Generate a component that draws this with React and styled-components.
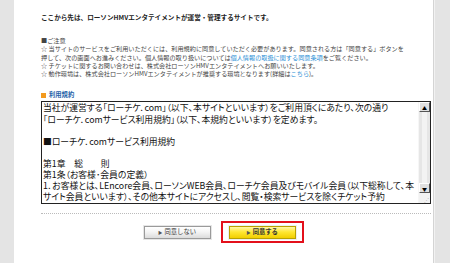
import React from 'react'
import styled, { createGlobalStyle } from 'styled-components'

const Global = createGlobalStyle`
  html, body { margin: 0; padding: 0; }
  body {
    background: #e4e4e4;
    font-family: "Noto Sans CJK JP", "Liberation Sans", sans-serif;
    color: #333;
  }
`

const Frame = styled.div`
  display: flex;
  height: 263px;
  width: 450px;
  overflow: hidden;
`

const Gutter = styled.div`
  width: ${({ $w }) => $w}px;
  flex: none;
  background: #e4e4e4;
  border-left: ${({ $edge }) => ($edge ? '1px solid #f2f2f2' : 'none')};
`

const Main = styled.div`
  width: 420px;
  background: #fff;
  border-right: 1px solid #d4d4d4;
  padding: 12px 0 0 27px;
  box-sizing: border-box;
  display: flex;
  flex-direction: column;
`

const Lead = styled.p`
  margin: 0;
  height: 10px;
  font-size: 6.6px;
  line-height: 10px;
  font-weight: bold;
  color: #222;
  white-space: nowrap;
`

const Notice = styled.div`
  margin-top: 15px;
  font-size: 6.15px;
  color: #444;
  white-space: nowrap;
`

const Line = styled.div`
  height: ${({ $h }) => $h}px;
  line-height: ${({ $h }) => $h}px;
`

const Link = styled.span`
  color: #2b8fd6;
`

const Heading = styled.div`
  margin-top: 13px;
  height: 8px;
  display: flex;
  align-items: center;
  gap: 3px;
  font-size: 6.3px;
  line-height: 8px;
  font-weight: bold;
  color: #1d5fa8;
`

const Square = styled.span`
  width: 5px;
  height: 5px;
  background: #f39a1e;
`

const TermsBox = styled.div`
  margin-top: 2px;
  width: 390px;
  height: 103px;
  border: 1px solid #222;
  box-sizing: border-box;
  display: flex;
`

const TermsText = styled.div`
  flex: 1;
  overflow: hidden;
  padding: 0 0 0 1px;
  font-size: 8.8px;
  font-feature-settings: "palt";
  color: #111;
  white-space: nowrap;
`

const Scroll = styled.div`
  width: 11px;
  flex: none;
  display: flex;
  flex-direction: column;
  background: #ececec;
  border-left: 1px solid #f6f6f6;
`

const Arrow = styled.div`
  height: 10px;
  box-sizing: border-box;
  border: 1px solid #fff;
  border-right-color: #555;
  border-bottom-color: #555;
  background: #e0e0e0;
  display: flex;
  align-items: center;
  justify-content: center;
  font-size: 5px;
  line-height: 5px;
  color: #000;
`

const Track = styled.div`
  flex: 1;
  background: linear-gradient(90deg, #e6e6e6 0 30%, #f3f3f3 30% 70%, #e6e6e6 70%);
`

const Grip = styled.div`
  height: 9px;
  background: #f2f2f2;
  display: flex;
  align-items: flex-end;
  justify-content: flex-end;
  font-size: 5px;
  line-height: 5px;
  color: #aaa;
  padding: 0 1px 1px 0;
`

const Rule = styled.div`
  margin-top: 9px;
  width: 390px;
  border-top: 1px dotted #bbb;
`

const Buttons = styled.div`
  margin-top: 7px;
  margin-left: -27px;
  display: flex;
  justify-content: center;
  align-items: center;
  gap: 10px;
`

const Highlight = styled.div`
  width: 83px;
  height: 22px;
  box-sizing: border-box;
  border: 2px solid #e3101b;
  display: flex;
  align-items: center;
  justify-content: center;
`

const Btn = styled.div`
  width: 67px;
  height: 13px;
  box-sizing: border-box;
  border: 1px solid ${({ $yes }) => ($yes ? '#b9a200' : '#9a9a9a')};
  background: ${({ $yes }) =>
    $yes
      ? 'linear-gradient(#fff7a8, #ffe733 45%, #f2cf00)'
      : 'linear-gradient(#ffffff, #f4f4f4 45%, #dcdcdc)'};
  box-shadow: ${({ $yes }) => ($yes ? '0 0 0 1px #eee' : '0 0 0 1px #e6e6e6')};
  display: flex;
  align-items: center;
  justify-content: center;
  font-size: 6.3px;
  line-height: 8px;
  font-weight: ${({ $yes }) => ($yes ? 'bold' : 'normal')};
  color: #333;
`

const Tri = styled.span`
  font-size: 4.5px;
  margin-right: 2px;
  color: #555;
`

const notices = [
  '■ご注意',
  '☆ 当サイトのサービスをご利用いただくには、利用規約に同意していただく必要があります。同意される方は「同意する」ボタンを',
  null,
  '☆ チケットに関するお問い合わせは、株式会社ローソンHMVエンタテイメントへお願いいたします。',
  null,
]

const terms = [
  '当社が運営する「ローチケ．com」（以下､本サイトといいます）をご利用頂くにあたり､次の通り',
  '「ローチケ．comサービス利用規約」（以下､本規約といいます）を定めます。',
  '\u00a0',
  '■ローチケ．comサービス利用規約',
  '\u00a0',
  '第1章　総　　則',
  '第1条（お客様･会員の定義）',
  '1．お客様とは､LEncore会員､ローソンWEB会員､ローチケ会員及びモバイル会員（以下総称して､本',
  'サイト会員といいます）､その他本サイトにアクセスし､閲覧・検索サービスを除くチケット予約',
  'サービス、ファンクラブの入会手続代行サービス等本サイトにおけるサービス（以下、本サービ',
]

export default function App() {
  return (
    <>
      <Global />
      <Frame>
        <Gutter $w={14} />
        <Main>
          <Lead>ここから先は、ローソンHMVエンタテイメントが運営・管理するサイトです。</Lead>
          <Notice>
            <Line $h={8.3}>{notices[0]}</Line>
            <Line $h={8.3}>{notices[1]}</Line>
            <Line $h={8.3}>
              押して、次の画面へお進みください。個人情報の取り扱いについては<Link>個人情報の取扱に関する同意条項</Link>をご覧ください。
            </Line>
            <Line $h={8.3}>{notices[3]}</Line>
            <Line $h={8.3}>
              ☆ 動作環境は、株式会社ローソンHMVエンタテイメントが推奨する環境となります(詳細は<Link>こちら</Link>)。
            </Line>
          </Notice>
          <Heading>
            <Square />
            利用規約
          </Heading>
          <TermsBox>
            <TermsText>
              {terms.map((t, i) => (
                <Line key={i} $h={11.1}>{t}</Line>
              ))}
            </TermsText>
            <Scroll>
              <Arrow>▲</Arrow>
              <Track />
              <Arrow>▼</Arrow>
              <Grip>⋰</Grip>
            </Scroll>
          </TermsBox>
          <Rule />
          <Buttons>
            <Btn>
              <Tri>▶</Tri>同意しない
            </Btn>
            <Highlight>
              <Btn $yes>
                <Tri>▶</Tri>同意する
              </Btn>
            </Highlight>
          </Buttons>
        </Main>
        <Gutter $w={15} $edge />
      </Frame>
    </>
  )
}
